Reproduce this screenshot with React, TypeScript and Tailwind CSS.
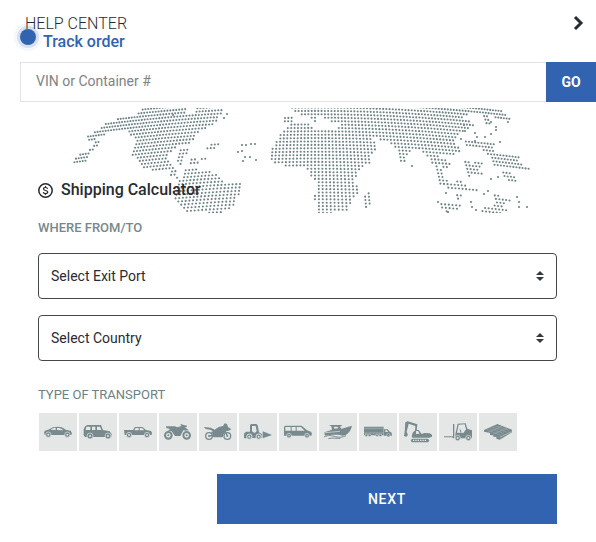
import type { ReactNode } from "react";

type Point = [number, number];

const land: Point[][] = [
  [[143, 107], [187, 107], [186, 113], [192, 116], [197, 107], [223, 107], [219, 120], [208, 128], [200, 130], [196, 137], [188, 146], [176, 147], [170, 152], [166, 160], [174, 170], [146, 170], [131, 153], [135, 141], [128, 130], [113, 131], [103, 135], [88, 144], [87, 137], [110, 121], [137, 114]],
  [[89, 151], [97, 139], [102, 139], [94, 151]],
  [[72, 164], [80, 153], [91, 153], [88, 160], [74, 165]],
  [[177, 165], [181, 148], [188, 149], [182, 166]],
  [[167, 160], [175, 166], [178, 179], [170, 177]],
  [[188, 163], [194, 156], [196, 161], [207, 155], [206, 161], [191, 164]],
  [[204, 152], [211, 142], [220, 141], [216, 151]],
  [[185, 170], [207, 169], [220, 177], [225, 182], [242, 183], [242, 191], [235, 198], [233, 207], [222, 213], [187, 213], [182, 208], [174, 200], [172, 190], [180, 180]],
  [[271, 162], [271, 150], [277, 140], [285, 128], [295, 122], [308, 123], [315, 131], [333, 130], [342, 126], [360, 130], [362, 134], [373, 139], [378, 147], [370, 155], [371, 162], [358, 172], [355, 182], [359, 192], [351, 202], [345, 213], [318, 213], [314, 197], [318, 185], [312, 178], [305, 168], [295, 167], [280, 165]],
  [[364, 195], [373, 191], [369, 208], [364, 208]],
  [[283, 116], [295, 116], [293, 122], [283, 122]],
  [[309, 116], [314, 116], [319, 122], [314, 122]],
  [[290, 107], [488, 107], [502, 110], [514, 121], [508, 123], [498, 118], [482, 114], [470, 113], [462, 117], [470, 121], [476, 127], [466, 129], [460, 133], [455, 139], [460, 152], [450, 157], [440, 156], [450, 163], [448, 170], [439, 165], [447, 180], [437, 182], [434, 165], [428, 158], [418, 150], [408, 152], [405, 164], [400, 160], [395, 147], [385, 141], [372, 138], [362, 134], [358, 131], [345, 130], [340, 125], [325, 120], [320, 115], [308, 116], [300, 115]],
  [[481, 115], [489, 116], [492, 126], [485, 126]],
  [[465, 140], [494, 142], [495, 152], [518, 155], [520, 163], [532, 171], [520, 171], [505, 166], [494, 167], [486, 151], [467, 146]],
  [[435, 181], [446, 179], [449, 185], [460, 180], [467, 186], [476, 187], [477, 191], [450, 190]],
  [[463, 160], [468, 160], [471, 169], [475, 158], [482, 163], [480, 171], [486, 176], [469, 176]],
  [[501, 170], [511, 173], [518, 180], [514, 184], [503, 178]],
  [[441, 203], [461, 203], [463, 209], [449, 209], [448, 213], [441, 210]],
  [[492, 194], [509, 198], [512, 202], [500, 205], [512, 213], [480, 213], [485, 207], [496, 205]],
  [[454, 192], [463, 194], [460, 200], [455, 198]],
];

const islands: Point[] = [
  [242, 145], [246, 145], [251, 144], [255, 144], [238, 152], [242, 151], [245, 157], [250, 157], [243, 161], [256, 160],
  [173, 115], [224, 118], [227, 114], [475, 133], [465, 131], [477, 137], [491, 134], [485, 137], [500, 142], [475, 141],
  [491, 179], [498, 177], [484, 194], [488, 191], [471, 202], [472, 207], [476, 210], [517, 197], [519, 202], [519, 207],
  [527, 207], [412, 166], [446, 193], [438, 202], [461, 139], [448, 212], [496, 127], [496, 130], [491, 122], [464, 125],
];

function isLand(x: number, y: number) {
  return land.some((shape) => {
    let inside = false;
    for (let i = 0, j = shape.length - 1; i < shape.length; j = i++) {
      const [ax, ay] = shape[i];
      const [bx, by] = shape[j];
      if (ay > y !== by > y && x < ((bx - ax) * (y - ay)) / (by - ay) + ax) inside = !inside;
    }
    return inside;
  });
}

// Rows bow downwards, and columns fan out and crowd together away from the prime meridian.
const dots: Point[] = [...islands];
for (let row = -9; row < 34; row++) {
  for (let col = -84; col < 84; col++) {
    const drop = row * 3.4;
    const side = col * 3.4;
    const x = 315 + side * (0.96 + drop * 0.002) * (1 - side * side * 0.0000012);
    const y = 107.5 + drop + (x - 315) ** 2 * 0.0003;
    if (isLand(x, y)) dots.push([x, y]);
  }
}

function WorldMap() {
  return (
    <svg className="pointer-events-none absolute left-0 top-0" width="596" height="105" viewBox="0 108 596 105" aria-hidden="true">
      {dots.map(([x, y], i) => (
        <circle key={i} cx={x.toFixed(2)} cy={y.toFixed(2)} r="1.05" fill="#6f8285" />
      ))}
    </svg>
  );
}

const cut = "#e4e7e6";

const transports: { name: string; art: ReactNode }[] = [
  {
    name: "Sedan",
    art: (
      <>
        <path d="M15 58l3-5 13-4c7-6 13-8 25-8 11 0 17 3 24 9l15 3 4 8-2 5H17z" />
        <path d="M35 50c5-5 9-6 15-6v7zM54 44c9 0 14 3 19 8l-19-1z" fill={cut} />
        <circle cx="28" cy="65" r="8" stroke={cut} strokeWidth="2" /><circle cx="85" cy="65" r="8" stroke={cut} strokeWidth="2" />
        <circle cx="28" cy="65" r="3" fill={cut} /><circle cx="85" cy="65" r="3" fill={cut} />
      </>
    ),
  },
  {
    name: "SUV",
    art: (
      <>
        <path d="M14 48l5-9 7-3h40l6 15 20 4 6 8-1 9H18l-4-5z" />
        <path d="M22 41h12v10H20zM39 41h10v10H39zM54 41h9l4 10H54z" fill={cut} />
        <circle cx="33" cy="69" r="9" stroke={cut} strokeWidth="2" /><circle cx="87" cy="69" r="9" stroke={cut} strokeWidth="2" />
        <circle cx="33" cy="69" r="3" fill={cut} /><circle cx="87" cy="69" r="3" fill={cut} />
      </>
    ),
  },
  {
    name: "Pickup",
    art: (
      <>
        <path d="M15 51h27l6-9h22l11 9 15 3 3 5-1 7H17z" />
        <path d="M50 45h9v7H46zM62 45h7l7 7H62z" fill={cut} />
        <circle cx="30" cy="66" r="8" stroke={cut} strokeWidth="2" /><circle cx="84" cy="66" r="8" stroke={cut} strokeWidth="2" />
        <circle cx="30" cy="66" r="3" fill={cut} /><circle cx="84" cy="66" r="3" fill={cut} />
      </>
    ),
  },
  {
    name: "ATV",
    art: (
      <>
        <path d="M21 40h27l6 3 14-4-4-3 2-3 8 3 10 2v3l-6 2 11 9-7 1-9-1-9 17H48L38 55l-15 1 10-8-11-3z" />
        <circle cx="28" cy="67" r="14" fill={cut} /><circle cx="83" cy="67" r="14" fill={cut} />
        <circle cx="28" cy="67" r="10" fill="none" stroke="#788a8e" strokeWidth="6" /><circle cx="83" cy="67" r="10" fill="none" stroke="#788a8e" strokeWidth="6" />
        <circle cx="28" cy="67" r="3" /><circle cx="83" cy="67" r="3" />
      </>
    ),
  },
  {
    name: "Motorcycle",
    art: (
      <>
        <path d="M15 42l20 2 12 6 12-8 13-3 5-8 7 2 3 9 10 7-8 4-8 2-10 18H44L34 58l8-3-8-5-14-2z" />
        <circle cx="30" cy="69" r="12" fill={cut} /><circle cx="85" cy="69" r="12" fill={cut} />
        <circle cx="30" cy="69" r="10" fill="none" stroke="#788a8e" strokeWidth="4" /><circle cx="85" cy="69" r="10" fill="none" stroke="#788a8e" strokeWidth="4" />
        <circle cx="30" cy="69" r="3" /><circle cx="85" cy="69" r="3" />
        <path d="M77 50l8 19M30 69l20-3" stroke="#788a8e" strokeWidth="4" />
      </>
    ),
  },
  {
    name: "Loader",
    art: (
      <>
        <path d="M15 76V62l6-6h12V36l4-3h15l4 4 4 21 9 6v10zM71 55l28 11-28 10z" />
        <path d="M39 39h11l3 16-6 5-8-5z" fill={cut} />
        <circle cx="31" cy="71" r="8" stroke={cut} strokeWidth="3" /><circle cx="59" cy="71" r="8" stroke={cut} strokeWidth="3" />
        <circle cx="31" cy="71" r="3" fill={cut} /><circle cx="59" cy="71" r="3" fill={cut} />
      </>
    ),
  },
  {
    name: "Van",
    art: (
      <>
        <path d="M15 41l4-3h49l16 14 12 4 3 6-2 6H15z" />
        <path d="M19 42h16v11H19zM38 42h12v11H38zM53 42h13l11 11H53z" fill={cut} />
        <circle cx="30" cy="68" r="7" stroke={cut} strokeWidth="2" /><circle cx="84" cy="68" r="7" stroke={cut} strokeWidth="2" />
        <circle cx="30" cy="68" r="2" fill={cut} /><circle cx="84" cy="68" r="2" fill={cut} />
      </>
    ),
  },
  {
    name: "Boat",
    art: (
      <>
        <path d="M30 36h38v3l-6 3 6 5 31-9c-3 15-11 25-24 31-16-5-32-5-57-1l-2-10 23-8-2-10z" />
        <path d="M44 41h11l3 5-12 1z" fill={cut} />
        <path d="M18 59l45-4" stroke={cut} strokeWidth="2" />
        <path d="M15 74c13-8 23-5 35-2s21 2 31-3M28 78c13-4 22 0 36-1" fill="none" stroke={cut} strokeWidth="7" />
        <path d="M15 72c13-7 23-4 35-1s21 2 31-3M28 77c13-4 22 0 36-1" fill="none" stroke="#788a8e" strokeWidth="3" />
      </>
    ),
  },
  {
    name: "Truck",
    art: (
      <>
        <path d="M15 41h59v26H15zM75 49h11l5 6 7 4 1 9H75z" />
        <path d="M15 46h59M15 60h59" stroke={cut} strokeWidth="1" />
        <path d="M79 52h5l3 5h-8z" fill={cut} />
        <g stroke={cut} strokeWidth="1.5"><circle cx="22" cy="67" r="4" /><circle cx="32" cy="67" r="4" /><circle cx="54" cy="67" r="4" /><circle cx="64" cy="67" r="4" /><circle cx="88" cy="67" r="5" /></g>
      </>
    ),
  },
  {
    name: "Excavator",
    art: (
      <>
        <path d="M19 28l7-3 29 9-2 20-5 3 1-18-20-7-6 24 4 10-6 6-6-4 2-12z" />
        <path d="M38 69l3-10 8-8h10l9 12 8-3 16 1 7 4v6l-8 3H40z" />
        <path d="M51 54h6l5 8-11 1z" fill={cut} />
        <rect x="36" y="77" width="54" height="11" rx="5" />
        <path d="M42 82h42" stroke={cut} strokeWidth="4" strokeDasharray="4 3" />
      </>
    ),
  },
  {
    name: "Forklift",
    art: (
      <>
        <path d="M15 70h27V33h4v43H41v-3H15zM49 64l7-32 24-1 5 16 14 5v24H49z" />
        <path d="M59 35l18-1 4 15-8 11-19-1z" fill={cut} />
        <path d="M66 59l-3-10" stroke="#788a8e" strokeWidth="3" />
        <circle cx="56" cy="75" r="8" stroke={cut} strokeWidth="2" /><circle cx="88" cy="75" r="8" stroke={cut} strokeWidth="2" />
        <circle cx="56" cy="75" r="3" fill={cut} /><circle cx="88" cy="75" r="3" fill={cut} />
      </>
    ),
  },
  {
    name: "Pallet",
    art: (
      <>
        <path d="M15 51l40-18 44 17v8L62 80l-10-3v-6l-9 1v-5l-10-1v-6l-18-4z" />
        <path d="M23 50l43 17M32 46l43 16M40 42l43 15M48 38l43 14M28 58l41-19M43 64l42-19" fill="none" stroke={cut} strokeWidth="0.6" />
        <path d="M62 73l36-17" stroke={cut} strokeWidth="1.5" />
      </>
    ),
  },
];

function PortSelect({ label }: { label: string }) {
  return (
    <div className="relative">
      <select aria-label={label} className="block h-[46px] w-full appearance-none rounded border border-[#45474b] bg-white px-3 text-sm text-[#292b32]">
        <option>{label}</option>
      </select>
      <svg className="pointer-events-none absolute right-[13px] top-[18px]" width="8" height="10" viewBox="0 0 8 10" fill="#343a40" aria-hidden="true">
        <path d="M0 4l4-4 4 4zM0 6h8l-4 4z" />
      </svg>
    </div>
  );
}

export default function App() {
  return (
    <main className="bg-white font-['Roboto',sans-serif] text-[#292b32]">
      <header className="flex items-start justify-between pl-[25px] pr-2 pt-[14px]">
        <a href="#help" className="text-base font-light leading-[19px]">HELP CENTER</a>
        <button aria-label="Next section" className="flex size-[18px] items-center justify-center">
          <svg width="12" height="16" viewBox="0 0 12 16" fill="none" stroke="#292b32" strokeWidth="3" aria-hidden="true">
            <path d="M2 2l6 6-6 6" />
          </svg>
        </button>
      </header>
      <section className="pl-5">
        <h2 className="relative pl-[23px] text-base font-medium leading-[18px] text-[#3163b1]">
          <span className="absolute -left-1.5 -top-2.5 size-7 rounded-full bg-[#3163b1]/5 p-[3px]">
            <span className="block size-[22px] rounded-full bg-[#3163b1]/15 p-[3px]">
              <span className="block size-4 rounded-full bg-[#3163b1]" />
            </span>
          </span>
          Track order
        </h2>
        <form className="mt-[11px] flex h-10" onSubmit={(event) => event.preventDefault()}>
          <input aria-label="VIN or Container number" placeholder="VIN or Container #" className="min-w-0 flex-1 border border-r-0 border-[#e2e4e4] px-[15px] pb-0.5 text-sm placeholder:text-[#7d8484]" />
          <button className="w-[50px] bg-[#3163b1] text-sm font-bold text-white">GO</button>
        </form>
      </section>
      <section className="relative mt-1.5 pb-[18px] pl-[38px] pr-[39px] pt-[72px]">
        <WorldMap />
        <h2 className="relative flex h-5 items-center gap-2 text-base font-medium">
          <svg width="15" height="15" viewBox="0 0 15 15" fill="none" stroke="#292b32" strokeWidth="1.5" aria-hidden="true">
            <circle cx="7.5" cy="7.5" r="6.7" />
            <path d="M9.6 5.8C9.4 4.9 8.7 4.5 7.5 4.5c-1.2 0-2 .5-2 1.4 0 2.2 4.2 1 4.2 3.2 0 .9-.9 1.5-2.2 1.5S5.4 10 5.3 9.1M7.5 3v1.5M7.5 10.5V12" strokeWidth="1.2" />
          </svg>
          Shipping Calculator
        </h2>
        <h3 className="mt-[18px] text-[13px] font-medium leading-5 text-[#75898c]">WHERE FROM/TO</h3>
        <div className="mt-[15px] flex flex-col gap-4">
          <PortSelect label="Select Exit Port" />
          <PortSelect label="Select Country" />
        </div>
        <h3 className="mt-6 text-[13px] leading-5 text-[#6d8184]">TYPE OF TRANSPORT</h3>
        <div className="mt-2 flex flex-wrap gap-0.5 pl-px">
          {transports.map(({ name, art }) => (
            <button key={name} aria-label={name} className="size-[38px] bg-[#e4e7e6]">
              <svg width="38" height="38" viewBox="0 0 114 114" fill="#788a8e" aria-hidden="true">{art}</svg>
            </button>
          ))}
        </div>
        <button className="ml-auto mt-[23px] block h-[50px] w-[340px] bg-[#3163b1] text-sm font-medium tracking-wider text-white">NEXT</button>
      </section>
    </main>
  );
}
